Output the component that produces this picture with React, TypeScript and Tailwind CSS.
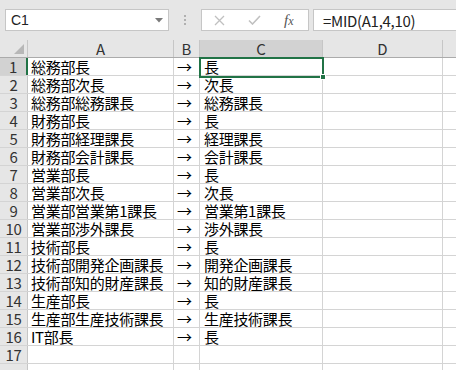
import React from "react";

const rows: [string, string][] = [
  ["総務部長", "長"],
  ["総務部次長", "次長"],
  ["総務部総務課長", "総務課長"],
  ["財務部長", "長"],
  ["財務部経理課長", "経理課長"],
  ["財務部会計課長", "会計課長"],
  ["営業部長", "長"],
  ["営業部次長", "次長"],
  ["営業部営業第1課長", "営業第1課長"],
  ["営業部渉外課長", "渉外課長"],
  ["技術部長", "長"],
  ["技術部開発企画課長", "開発企画課長"],
  ["技術部知的財産課長", "知的財産課長"],
  ["生産部長", "長"],
  ["生産部生産技術課長", "生産技術課長"],
  ["IT部長", "長"],
  ["", ""],
  ["", ""],
];

const font = { fontFamily: '"Noto Sans CJK JP", "Noto Sans", sans-serif' };

export default function App() {
  return (
    <div className="w-[456px] h-[370px] overflow-hidden bg-[#e6e6e6] text-black relative" style={font}>
      {/* formula bar */}
      <div className="h-[40px] flex items-start pt-[9px]">
        <div className="ml-[5px] w-[164px] h-[22px] bg-white border border-[#c6c6c6] flex items-center justify-between pl-[5px] pr-[5px]">
          <span className="text-[14px] leading-none text-[#222]" style={{ fontFamily: '"Liberation Sans", sans-serif' }}>C1</span>
          <svg width="8" height="5" viewBox="0 0 8 5"><path d="M0 0 L8 0 L4 4.5 Z" fill="#7a7a7a" /></svg>
        </div>
        <div className="w-[32px] h-[22px] flex flex-col items-center justify-center gap-[2px]">
          <div className="w-[2px] h-[2px] bg-[#b0b0b0]" />
          <div className="w-[2px] h-[2px] bg-[#b0b0b0]" />
          <div className="w-[2px] h-[2px] bg-[#b0b0b0]" />
        </div>
        <div className="w-[108px] h-[22px] bg-white border border-[#c6c6c6] flex items-center">
          <svg className="ml-[12px]" width="11" height="11" viewBox="0 0 11 11"><path d="M1 1 L10 10 M10 1 L1 10" stroke="#c0c0c0" strokeWidth="1.3" /></svg>
          <svg className="ml-[23px]" width="13" height="10" viewBox="0 0 13 10"><path d="M1 5.5 L4.5 9 L12 1" stroke="#c0c0c0" strokeWidth="1.6" fill="none" /></svg>
          <span className="ml-[23px] text-[15px] italic text-[#555] leading-none" style={{ fontFamily: '"Liberation Serif", serif' }}>f<span className="text-[12px]">x</span></span>
        </div>
        <div className="ml-[4px] flex-1 h-[22px] bg-white border border-[#c6c6c6] border-r-0 flex items-center pl-[9px]">
          <span className="text-[15px] leading-none text-[#222] tracking-[-0.3px]" style={font}>=MID(A1,4,10)</span>
        </div>
      </div>

      {/* header row */}
      <div className="flex h-[18px] bg-[#e6e6e6] border-b border-[#ababab] text-[15px] leading-none text-[#333]">
        <div className="w-[28px] shrink-0 border-r border-[#c6c6c6] relative">
          <svg className="absolute right-[3px] bottom-[3px]" width="10" height="10" viewBox="0 0 10 10"><path d="M10 0 L10 10 L0 10 Z" fill="#b7b7b7" /></svg>
        </div>
        <div className="w-[146px] shrink-0 border-r border-[#c6c6c6] flex items-center justify-center">A</div>
        <div className="w-[26px] shrink-0 border-r border-[#c6c6c6] flex items-center justify-center">B</div>
        <div className="w-[123px] shrink-0 border-r border-[#c6c6c6] bg-[#d2d2d2] flex items-center justify-center">C</div>
        <div className="w-[120px] shrink-0 border-r border-[#c6c6c6] flex items-center justify-center">D</div>
        <div className="flex-1" />
      </div>

      {/* rows */}
      <div className="bg-white">
        {rows.map(([a, c], i) => (
          <div key={i} className="flex h-[18px] border-b border-[#d4d4d4] text-[15px] leading-none tracking-[-0.3px]">
            <div
              className={
                i === 0
                  ? "w-[28px] shrink-0 bg-[#d2d2d2] border-r-2 border-[#217346] flex items-center justify-center text-[#333]"
                  : "w-[28px] shrink-0 bg-[#e6e6e6] border-r border-[#c6c6c6] flex items-center justify-center text-[#333]"
              }
            >
              {i < 17 ? i + 1 : ""}
            </div>
            <div className="w-[146px] shrink-0 border-r border-[#d4d4d4] flex items-center pl-[3px] whitespace-nowrap">{a}</div>
            <div className="w-[26px] shrink-0 border-r border-[#d4d4d4] flex items-center pl-[3px]">{a ? "→" : ""}</div>
            <div className="w-[123px] shrink-0 border-r border-[#d4d4d4] flex items-center pl-[4px] whitespace-nowrap">{c}</div>
            <div className="w-[120px] shrink-0 border-r border-[#d4d4d4]" />
            <div className="flex-1" />
          </div>
        ))}
      </div>

      {/* selection */}
      <div className="absolute left-[199px] top-[57px] w-[125px] h-[21px] border-2 border-[#217346]" />
      <div className="absolute left-[320px] top-[74px] w-[6px] h-[6px] bg-[#217346] border border-white" />
    </div>
  );
}
